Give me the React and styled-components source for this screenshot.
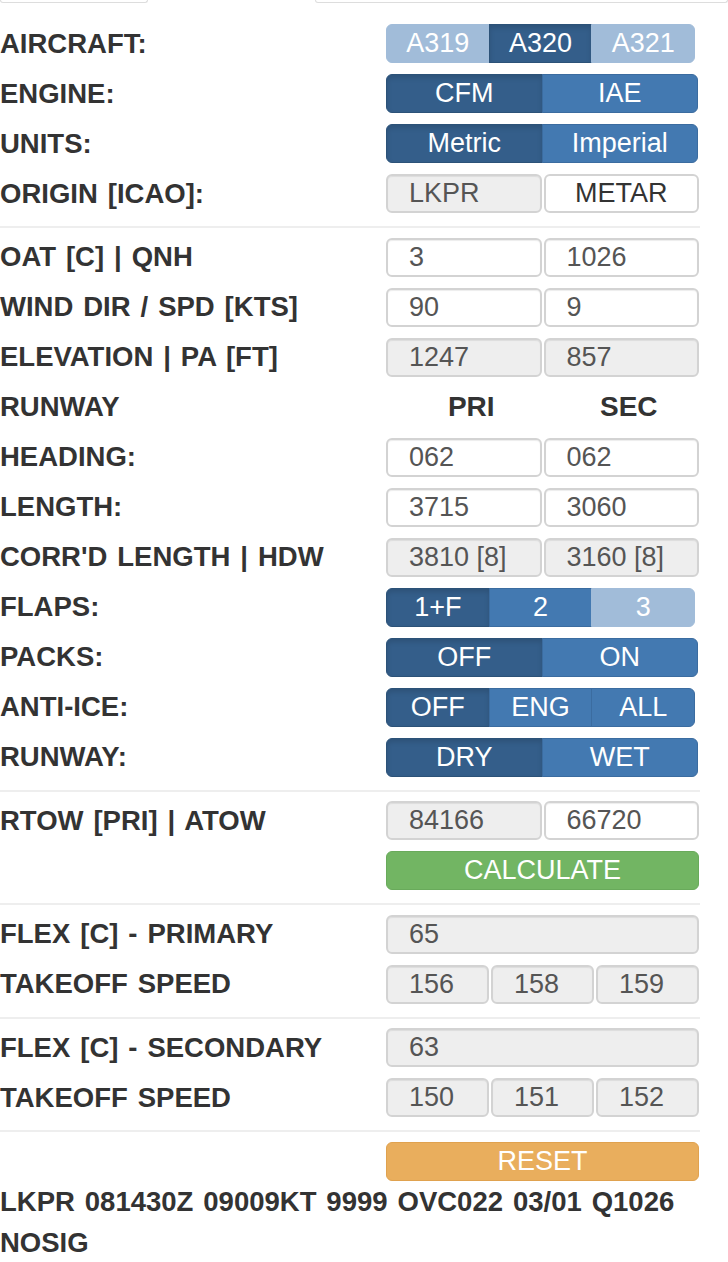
import React from 'react';
import styled, { createGlobalStyle, css } from 'styled-components';

const GlobalStyle = createGlobalStyle`
  body {
    margin: 0;
    background: #fff;
    color: #333;
    font-family: "Liberation Sans", Arial, sans-serif;
  }
`;

const TabStrip = styled.div`
  display: flex;
  width: 728px;
  height: 3px;
`;

const Tab = styled.div`
  box-sizing: border-box;
  height: 3px;
  width: ${props => props.$width || 'auto'};
  flex: ${props => (props.$grow ? 1 : 'none')};
  border: 1px solid ${props => (props.$active ? 'transparent' : '#ddd')};
  border-top: 0;
  border-radius: 0 0 5px 5px;
`;

const Form = styled.div`
  display: flex;
  flex-direction: column;
  width: 700px;
  padding-top: 21px;
`;

const Row = styled.div`
  display: grid;
  grid-template-columns: 386px 313px;
  align-items: center;
  height: 39px;
  margin-bottom: ${props => (props.$tight ? '0' : '11px')};
`;

const Label = styled.div`
  font-size: 27.5px;
  font-weight: bold;
  word-spacing: 2.3px;
  white-space: nowrap;
`;

const Divider = styled.hr`
  flex: none;
  border: 0;
  height: 2px;
  background: #eee;
  margin: 2px 0 9.5px;
`;

const tones = {
  active: css`
    background: #345e8a;
    border-color: #2c5278;
    box-shadow: inset 0 3px 5px rgba(0, 0, 0, 0.125);
  `,
  normal: css`
    background: #4379b1;
    border-color: #3b6ca0;
  `,
  light: css`
    background: #a1bcd9;
    border-color: #a1bcd9;
  `,
};

const ButtonGroup = styled.div`
  display: flex;
  width: ${props => props.$width}px;
  height: 39px;
`;

const SegButton = styled.button`
  flex: 1;
  min-width: 0;
  margin: 0 0 0 -1px;
  padding: 0;
  border: 1px solid;
  color: #fff;
  font: 27px "Liberation Sans", Arial, sans-serif;
  ${props => tones[props.$tone]}

  &:first-child {
    margin-left: 0;
    border-radius: 6px 0 0 6px;
  }
  &:last-child {
    border-radius: 0 6px 6px 0;
  }
`;

const FieldGrid = styled.div`
  display: grid;
  grid-template-columns: repeat(${props => props.$cols}, 1fr);
  gap: 2px;
  height: 39px;
`;

const Field = styled.input`
  box-sizing: border-box;
  width: 100%;
  min-width: 0;
  height: 39px;
  padding: 0 0 0 21px;
  border: 2px solid #d3d3d3;
  border-radius: 6px;
  background: ${props => (props.readOnly ? '#eee' : '#fff')};
  color: #555;
  font: 27px "Liberation Sans", Arial, sans-serif;
  box-shadow: inset 0 1px 1px rgba(0, 0, 0, 0.075);
  outline: none;
`;

const PlainButton = styled.button`
  box-sizing: border-box;
  height: 39px;
  padding: 0;
  border: 2px solid #d3d3d3;
  border-radius: 6px;
  background: #fff;
  color: #333;
  font: 27px "Liberation Sans", Arial, sans-serif;
`;

const ActionButton = styled.button`
  box-sizing: border-box;
  width: 313px;
  height: 39px;
  padding: 0;
  border: 1px solid ${props => (props.$color === 'green' ? '#69aa5b' : '#e0a24f')};
  border-radius: 6px;
  background: ${props => (props.$color === 'green' ? '#72b563' : '#e9ae5d')};
  color: #fff;
  font: 27px "Liberation Sans", Arial, sans-serif;
`;

const ColumnHeads = styled.div`
  display: grid;
  grid-template-columns: 1fr 1fr;
  gap: 2px;
`;

const ColumnHead = styled.div`
  padding-left: 15px;
  text-align: center;
  font-size: 28px;
  font-weight: bold;
`;

const Metar = styled.div`
  width: 700px;
  font-size: 27.5px;
  font-weight: bold;
  word-spacing: 2.3px;
  line-height: 41px;
`;

const Toggle = ({ width, options }) => (
  <ButtonGroup $width={width}>
    {options.map(([text, tone]) => (
      <SegButton key={text} $tone={tone}>{text}</SegButton>
    ))}
  </ButtonGroup>
);

const Fields = ({ values, locked }) => (
  <FieldGrid $cols={values.length}>
    {values.map((v, i) => (
      <Field key={i} defaultValue={v} readOnly={locked} />
    ))}
  </FieldGrid>
);

const App = () => (
  <>
    <GlobalStyle />
    <TabStrip>
      <Tab $width="148px" />
      <Tab $width="167px" $active />
      <Tab $grow />
    </TabStrip>
    <Form>
      <Row>
        <Label>AIRCRAFT:</Label>
        <Toggle width={309} options={[['A319', 'light'], ['A320', 'active'], ['A321', 'light']]} />
      </Row>
      <Row>
        <Label>ENGINE:</Label>
        <Toggle width={312} options={[['CFM', 'active'], ['IAE', 'normal']]} />
      </Row>
      <Row>
        <Label>UNITS:</Label>
        <Toggle width={312} options={[['Metric', 'active'], ['Imperial', 'normal']]} />
      </Row>
      <Row>
        <Label>ORIGIN [ICAO]:</Label>
        <FieldGrid $cols={2}>
          <Field defaultValue="LKPR" readOnly />
          <PlainButton>METAR</PlainButton>
        </FieldGrid>
      </Row>
      <Divider />

      <Row>
        <Label>OAT [C] | QNH</Label>
        <Fields values={['3', '1026']} />
      </Row>
      <Row>
        <Label>WIND DIR / SPD [KTS]</Label>
        <Fields values={['90', '9']} />
      </Row>
      <Row>
        <Label>ELEVATION | PA [FT]</Label>
        <Fields values={['1247', '857']} locked />
      </Row>
      <Row>
        <Label>RUNWAY</Label>
        <ColumnHeads>
          <ColumnHead>PRI</ColumnHead>
          <ColumnHead>SEC</ColumnHead>
        </ColumnHeads>
      </Row>
      <Row>
        <Label>HEADING:</Label>
        <Fields values={['062', '062']} />
      </Row>
      <Row>
        <Label>LENGTH:</Label>
        <Fields values={['3715', '3060']} />
      </Row>
      <Row>
        <Label>CORR'D LENGTH | HDW</Label>
        <Fields values={['3810 [8]', '3160 [8]']} locked />
      </Row>
      <Row>
        <Label>FLAPS:</Label>
        <Toggle width={309} options={[['1+F', 'active'], ['2', 'normal'], ['3', 'light']]} />
      </Row>
      <Row>
        <Label>PACKS:</Label>
        <Toggle width={312} options={[['OFF', 'active'], ['ON', 'normal']]} />
      </Row>
      <Row>
        <Label>ANTI-ICE:</Label>
        <Toggle width={309} options={[['OFF', 'active'], ['ENG', 'normal'], ['ALL', 'normal']]} />
      </Row>
      <Row>
        <Label>RUNWAY:</Label>
        <Toggle width={312} options={[['DRY', 'active'], ['WET', 'normal']]} />
      </Row>
      <Divider />

      <Row>
        <Label>RTOW [PRI] | ATOW</Label>
        <FieldGrid $cols={2}>
          <Field defaultValue="84166" readOnly />
          <Field defaultValue="66720" />
        </FieldGrid>
      </Row>
      <Row>
        <Label />
        <ActionButton $color="green">CALCULATE</ActionButton>
      </Row>
      <Divider />

      <Row>
        <Label>FLEX [C] - PRIMARY</Label>
        <Fields values={['65']} locked />
      </Row>
      <Row>
        <Label>TAKEOFF SPEED</Label>
        <Fields values={['156', '158', '159']} locked />
      </Row>
      <Divider />

      <Row>
        <Label>FLEX [C] - SECONDARY</Label>
        <Fields values={['63']} locked />
      </Row>
      <Row>
        <Label>TAKEOFF SPEED</Label>
        <Fields values={['150', '151', '152']} locked />
      </Row>
      <Divider />

      <Row $tight>
        <Label />
        <ActionButton $color="orange">RESET</ActionButton>
      </Row>
      <Metar>LKPR 081430Z 09009KT 9999 OVC022 03/01 Q1026 NOSIG</Metar>
    </Form>
  </>
);

export default App;
